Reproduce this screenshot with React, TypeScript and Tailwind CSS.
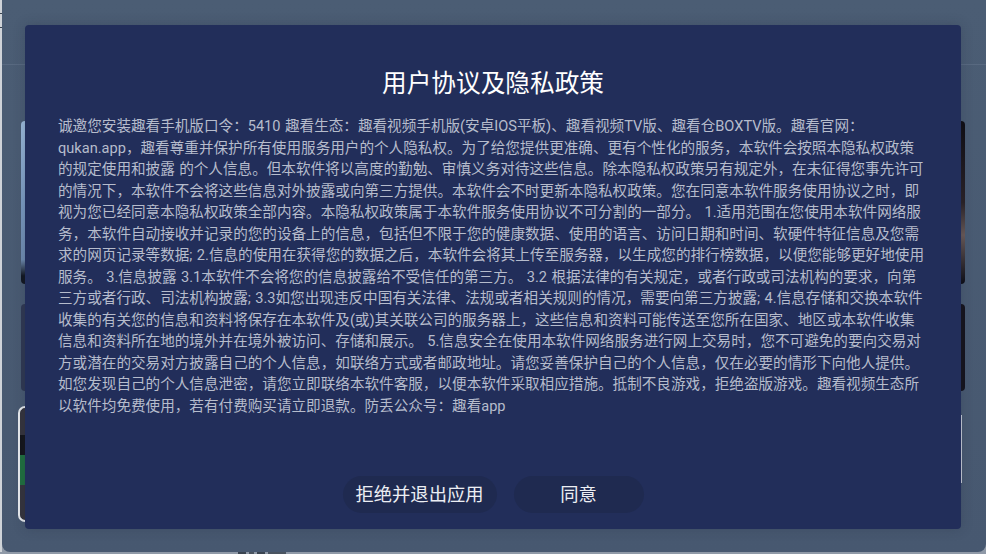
const lines = [
  "诚邀您安装趣看手机版口令：5410 趣看生态：趣看视频手机版(安卓IOS平板)、趣看视频TV版、趣看仓BOXTV版。趣看官网：",
  "qukan.app，趣看尊重并保护所有使用服务用户的个人隐私权。为了给您提供更准确、更有个性化的服务，本软件会按照本隐私权政策",
  "的规定使用和披露 的个人信息。但本软件将以高度的勤勉、审慎义务对待这些信息。除本隐私权政策另有规定外，在未征得您事先许可",
  "的情况下，本软件不会将这些信息对外披露或向第三方提供。本软件会不时更新本隐私权政策。您在同意本软件服务使用协议之时，即",
  "视为您已经同意本隐私权政策全部内容。本隐私权政策属于本软件服务使用协议不可分割的一部分。 1.适用范围在您使用本软件网络服",
  "务，本软件自动接收并记录的您的设备上的信息，包括但不限于您的健康数据、使用的语言、访问日期和时间、软硬件特征信息及您需",
  "求的网页记录等数据; 2.信息的使用在获得您的数据之后，本软件会将其上传至服务器，以生成您的排行榜数据，以便您能够更好地使用",
  "服务。 3.信息披露 3.1本软件不会将您的信息披露给不受信任的第三方。 3.2 根据法律的有关规定，或者行政或司法机构的要求，向第",
  "三方或者行政、司法机构披露; 3.3如您出现违反中国有关法律、法规或者相关规则的情况，需要向第三方披露; 4.信息存储和交换本软件",
  "收集的有关您的信息和资料将保存在本软件及(或)其关联公司的服务器上，这些信息和资料可能传送至您所在国家、地区或本软件收集",
  "信息和资料所在地的境外并在境外被访问、存储和展示。 5.信息安全在使用本软件网络服务进行网上交易时，您不可避免的要向交易对",
  "方或潜在的交易对方披露自己的个人信息，如联络方式或者邮政地址。请您妥善保护自己的个人信息，仅在必要的情形下向他人提供。",
  "如您发现自己的个人信息泄密，请您立即联络本软件客服，以便本软件采取相应措施。抵制不良游戏，拒绝盗版游戏。趣看视频生态所",
  "以软件均免费使用，若有付费购买请立即退款。防丢公众号：趣看app",
];

export default function App() {
  return (
    <div className="relative flex h-[554px] w-[986px] flex-col overflow-hidden bg-[#8f99a7] font-['Roboto','Noto_Sans_CJK_SC',sans-serif]">
      {/* sliver of the window behind, left edge */}
      <div className="absolute top-0 left-0 flex h-[552px] w-[2px] flex-col bg-[#cfd3d8]">
        <div className="mt-[13px] h-px bg-[#3a4450]" />
        <div className="mt-[13px] h-px bg-[#3a4450]" />
      </div>

      {/* page behind the dialog */}
      <div className="ml-[2px] h-[552px] shrink-0 overflow-hidden rounded-b-[8px] bg-[linear-gradient(180deg,#4b5d74,#475870)]">
        <div className="h-[65px] border-b border-[#586980]" />
        <div className="flex justify-between pr-[21px] pl-[16px] pt-[56px]">
          <div className="flex flex-col items-end">
            <div className="h-[163px] w-[4px] rounded-l-[4px] bg-[linear-gradient(180deg,#9dbcdc,#7c9cc2_50%,#6f8cb0_85%,#111620_95%)]" />
            <div className="mt-[20px] h-[87px] w-[4px] rounded-l-[4px] bg-[#2f3852]" />
            <div className="mt-[15px] flex h-[116px] w-[7px] flex-col overflow-hidden rounded-l-[7px] border-2 border-r-0 border-[#e8ebef] bg-[#35343c]">
              <div className="mt-[27px] h-[20px] bg-[#14151a]" />
              <div className="h-[30px] bg-[#20703f]" />
            </div>
          </div>
          <div className="flex flex-col">
            <div className="h-[163px] w-[4px] rounded-r-[4px] bg-[linear-gradient(180deg,#0e0c12,#2a2226_50%,#6a5a58_70%,#0c0c14)]" />
            <div className="mt-[20px] h-[87px] w-[4px] rounded-r-[4px] bg-[#15131c]" />
            <div className="mt-[24px] h-[68px] w-[1px] bg-[#c9ced8]" />
          </div>
        </div>
      </div>

      {/* cut-off text of the page under the window */}
      <div className="ml-[238px] flex h-[2px] gap-[3px]">
        <div className="w-[8px] bg-[#3a4450]" />
        <div className="w-[5px] bg-[#4a5460]" />
        <div className="w-[8px] bg-[#3a4450]" />
        <div className="w-[18px] bg-[#4a5460]" />
      </div>

      {/* dialog */}
      <div className="absolute top-[25px] left-[25px] flex h-[504px] w-[936px] flex-col rounded-[4px] bg-[#222e5a] px-[33px] shadow-[0_0_12px_rgba(30,40,60,0.25)]">
        <h1 className="mt-[43px] text-center text-[24.67px] leading-[32px] font-normal text-white">用户协议及隐私政策</h1>
        <div className="mt-[16px] text-[14.6px] leading-[21.5px] whitespace-nowrap text-[#b6bccc] [word-spacing:0.8px]">
          {lines.map((line) => (
            <p key={line}>{line}</p>
          ))}
        </div>
        <div className="mt-auto mb-[16px] flex justify-center gap-[17px] text-[18.3px] text-[#eceef3]">
          <button className="h-[37px] w-[154px] rounded-full bg-[#1f2a50] pt-[1px]">拒绝并退出应用</button>
          <button className="h-[37px] w-[130px] rounded-full bg-[#1f2a50] pt-[1px]">同意</button>
        </div>
      </div>
    </div>
  );
}
